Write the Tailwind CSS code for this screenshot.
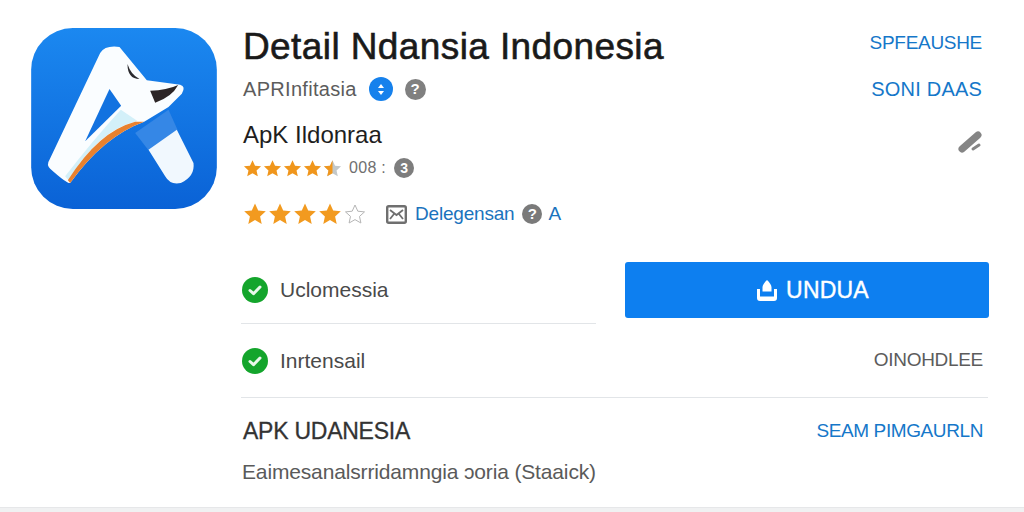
<!DOCTYPE html>
<html lang="id">
<head>
<meta charset="utf-8">
<script src="https://cdn.jsdelivr.net/npm/@tailwindcss/browser@4"></script>
<title>Detail</title>
</head>
<body class="bg-white">
<div class="w-[1024px] h-[512px] overflow-hidden flex flex-col font-['Liberation_Sans',sans-serif] bg-white">
  <div class="h-[262px] shrink-0 flex pl-[31px] pt-[28px]">
    <svg class="w-[186px] h-[181px] shrink-0" viewBox="33 25 557 543">
      <defs>
        <linearGradient id="bg" x1="0" y1="0" x2="0" y2="1"><stop offset="0" stop-color="#1b88f0"/><stop offset="1" stop-color="#0a62d6"/></linearGradient>
      </defs>
      <rect x="33" y="25" width="557" height="543" rx="125" fill="url(#bg)"/>
      <path d="M345 340L445 270L472 330L385 392Z" fill="#3587e6"/>
      <path d="M385 390L470 330L520 430Q525 470 482 490Q450 497 435 470Z" fill="#f1f8fe"/>
      <path d="M240 100Q255 76 298 82L380 182L480 195Q498 200 485 222L445 262L372 306Q250 350 150 490Q140 492 90 447Q78 435 88 420Z" fill="#fafdff"/>
      <path d="M268 208L303 258L195 365Z" fill="#1272e0"/>
      <path d="M302 270L352 304Q235 330 145 482L135 470Q215 365 302 270Z" fill="#d3f0f9"/>
      <path d="M372 306Q250 350 150 490L143 482Q235 335 345 306Z" fill="#e8812f"/>
      <path d="M322 133Q332 165 358 178Q322 178 322 133Z" fill="#2a2a2e"/>
      <path d="M390 213Q440 212 474 196Q455 232 405 249Z" fill="#2c2526"/>
    </svg>
    <div class="ml-[26px] w-[745px] flex flex-col">
      <div class="flex justify-between items-center h-[36px]">
        <h1 class="text-[37px] leading-none font-medium text-[#1a1a1a] tracking-[0.4px] [-webkit-text-stroke:0.6px_#1a1a1a]">Detail Ndansia Indonesia</h1>
        <span class="text-[19px] text-[#1577c9] tracking-[-0.3px] mr-[6px] mb-[6px]">SPFEAUSHE</span>
      </div>
      <div class="flex justify-between items-center h-[26px] mt-[12px]">
        <div class="flex items-center">
          <span class="text-[20px] text-[#5c5c5c] tracking-[0.3px]">APRInfitasia</span>
          <span class="ml-[12px] w-[24px] h-[24px] rounded-full bg-[#1681ec] flex flex-col items-center justify-center gap-[3px]"><span class="w-0 h-0 border-x-[3px] border-x-transparent border-b-[4px] border-b-white"></span><span class="w-0 h-0 border-x-[3px] border-x-transparent border-t-[4px] border-t-white"></span></span>
          <span class="ml-[12px] w-[21px] h-[21px] rounded-full bg-[#808080] text-white text-[15px] font-bold flex items-center justify-center">?</span>
        </div>
        <span class="text-[20px] text-[#1577c9] tracking-[0.2px] mr-[6px]">SONI DAAS</span>
      </div>
      <div class="flex justify-between items-center h-[26px] mt-[20px]">
        <span class="text-[24px] text-[#1e1e1e]">ApK Ildonraa</span>
        <svg class="w-[26px] h-[24px] mr-[4px] mt-[12px]" viewBox="0 0 26 24"><path d="M4 20L20 6" stroke="#858585" stroke-width="7" stroke-linecap="round"/><path d="M15 20L21 16" stroke="#858585" stroke-width="3" stroke-linecap="round"/></svg>
      </div>
      <div class="flex items-center h-[20px] mt-[11px] -translate-y-[1px]">
        <div class="flex gap-[1px]">
          <svg class="w-[19px] h-[19px] fill-[#f0961c]" viewBox="0 0 24 24"><path d="M12 1.5l3.2 7 7.6.8-5.7 5.1 1.6 7.5L12 18.1l-6.7 3.8 1.6-7.5-5.7-5.1 7.6-.8z"/></svg>
          <svg class="w-[19px] h-[19px] fill-[#f0961c]" viewBox="0 0 24 24"><path d="M12 1.5l3.2 7 7.6.8-5.7 5.1 1.6 7.5L12 18.1l-6.7 3.8 1.6-7.5-5.7-5.1 7.6-.8z"/></svg>
          <svg class="w-[19px] h-[19px] fill-[#f0961c]" viewBox="0 0 24 24"><path d="M12 1.5l3.2 7 7.6.8-5.7 5.1 1.6 7.5L12 18.1l-6.7 3.8 1.6-7.5-5.7-5.1 7.6-.8z"/></svg>
          <svg class="w-[19px] h-[19px] fill-[#f0961c]" viewBox="0 0 24 24"><path d="M12 1.5l3.2 7 7.6.8-5.7 5.1 1.6 7.5L12 18.1l-6.7 3.8 1.6-7.5-5.7-5.1 7.6-.8z"/></svg>
          <svg class="w-[19px] h-[19px]" viewBox="0 0 24 24"><path d="M12 1.5l3.2 7 7.6.8-5.7 5.1 1.6 7.5L12 18.1l-6.7 3.8 1.6-7.5-5.7-5.1 7.6-.8z" fill="#c3c8c9"/><path d="M12 1.5V18.1l-6.7 3.8 1.6-7.5-5.7-5.1 7.6-.8z" fill="#f0961c"/></svg>
        </div>
        <span class="ml-[7px] text-[16px] text-[#707070] tracking-[0.3px]">008 :</span>
        <span class="ml-[8px] w-[20px] h-[20px] rounded-full bg-[#7d7d7d] text-white text-[14px] font-bold flex items-center justify-center">3</span>
      </div>
      <div class="flex items-center h-[26px] mt-[22px]">
        <div class="flex gap-[1px] w-[125px]">
          <svg class="w-[24px] h-[24px] fill-[#f29a1f]" viewBox="0 0 24 24"><path d="M12 1.5l3.2 7 7.6.8-5.7 5.1 1.6 7.5L12 18.1l-6.7 3.8 1.6-7.5-5.7-5.1 7.6-.8z"/></svg>
          <svg class="w-[24px] h-[24px] fill-[#f29a1f]" viewBox="0 0 24 24"><path d="M12 1.5l3.2 7 7.6.8-5.7 5.1 1.6 7.5L12 18.1l-6.7 3.8 1.6-7.5-5.7-5.1 7.6-.8z"/></svg>
          <svg class="w-[24px] h-[24px] fill-[#f29a1f]" viewBox="0 0 24 24"><path d="M12 1.5l3.2 7 7.6.8-5.7 5.1 1.6 7.5L12 18.1l-6.7 3.8 1.6-7.5-5.7-5.1 7.6-.8z"/></svg>
          <svg class="w-[24px] h-[24px] fill-[#f29a1f]" viewBox="0 0 24 24"><path d="M12 1.5l3.2 7 7.6.8-5.7 5.1 1.6 7.5L12 18.1l-6.7 3.8 1.6-7.5-5.7-5.1 7.6-.8z"/></svg>
          <svg class="w-[24px] h-[24px] fill-none stroke-[#b5b5b5]" viewBox="0 0 24 24"><path d="M12 3l2.8 6.2 6.7.7-5 4.5 1.4 6.6-5.9-3.4-5.9 3.4 1.4-6.6-5-4.5 6.7-.7z"/></svg>
        </div>
        <svg class="ml-[18px] w-[21px] h-[19px]" viewBox="0 0 21 19"><rect x="1.2" y="1.2" width="18.6" height="16.6" rx="1.5" fill="#fff" stroke="#6f6f6f" stroke-width="2.4"/><path d="M4 5l6.500 5L17 5M4 14l4-5M17 14l-4-5" fill="none" stroke="#6f6f6f" stroke-width="1.800"/></svg>
        <span class="ml-[8px] text-[19px] text-[#1a73bd] tracking-[-0.2px]">Delegensan</span>
        <span class="ml-[8px] w-[20px] h-[20px] rounded-full bg-[#7a7a7a] text-white text-[15px] font-bold flex items-center justify-center">?</span>
        <span class="ml-[6px] text-[19px] text-[#1a73bd]">A</span>
      </div>
    </div>
  </div>
  <div class="pl-[241px] pr-[35px] flex flex-col shrink-0">
    <div class="flex justify-between items-center h-[56px]">
      <div class="flex items-center gap-[12px] pl-[1px]">
        <svg class="w-[26px] h-[26px]" viewBox="0 0 26 26"><circle cx="13" cy="13" r="13" fill="#14a52c"/><path d="M8 13.500l3.500 3.200L18 10" fill="none" stroke="#e8f8ea" stroke-width="3" stroke-linecap="round" stroke-linejoin="round"/></svg>
        <span class="text-[21px] text-[#4a4a4a]">Uclomessia</span>
      </div>
      <button class="w-[364px] h-[56px] pl-[10px] rounded-[3px] bg-[#0d7ff0] text-white text-[23px] font-medium flex items-center justify-center gap-[7px] tracking-[0.2px] [-webkit-text-stroke:0.4px_#fff]">
        <svg class="w-[24px] h-[23px]" viewBox="0 0 24 23"><path d="M12 1c2.500 2.500 4.500 4.800 4.500 7.500v4h-9v-4C7.500 5.800 9.500 3.500 12 1z" fill="#fff"/><path d="M2 10h3v7.500h14V10h3v9q0 3-3 3H5q-3 0-3-3z" fill="#fff"/></svg>
        UNDUA
      </button>
    </div>
    <div class="w-[355px] h-px bg-[#e2e5e8] mt-[5px]"></div>
    <div class="flex justify-between items-center h-[73px]">
      <div class="flex items-center gap-[12px] pl-[1px]">
        <svg class="w-[26px] h-[26px]" viewBox="0 0 26 26"><circle cx="13" cy="13" r="13" fill="#14a52c"/><path d="M8 13.500l3.500 3.200L18 10" fill="none" stroke="#e8f8ea" stroke-width="3" stroke-linecap="round" stroke-linejoin="round"/></svg>
        <span class="text-[21px] text-[#4a4a4a]">Inrtensail</span>
      </div>
      <span class="text-[19px] text-[#5c5c5c] mr-[6px] tracking-[-0.3px]">OINOHDLEE</span>
    </div>
    <div class="h-px bg-[#e2e5e8] mr-[1px]"></div>
    <div class="flex justify-between items-center mt-[19px] h-[28px]">
      <span class="pl-[2px] text-[23px] font-medium text-[#333] tracking-[-0.25px] [-webkit-text-stroke:0.3px_#333]">APK UDANESIA</span>
      <span class="text-[19px] text-[#1577c9] mr-[6px] tracking-[-0.4px]">SEAM PIMGAURLN</span>
    </div>
    <p class="mt-[14px] pl-[1px] text-[21px] leading-[26px] text-[#5a5a5a] tracking-[-0.15px]">Eaimesanalsrridamngia ɔoria (Staaick)</p>
  </div>
  <div class="h-[5px] mt-[22px] bg-[#f0f1f2] border-t border-[#e6e7e9] shrink-0"></div>
</div>
</body>
</html>
